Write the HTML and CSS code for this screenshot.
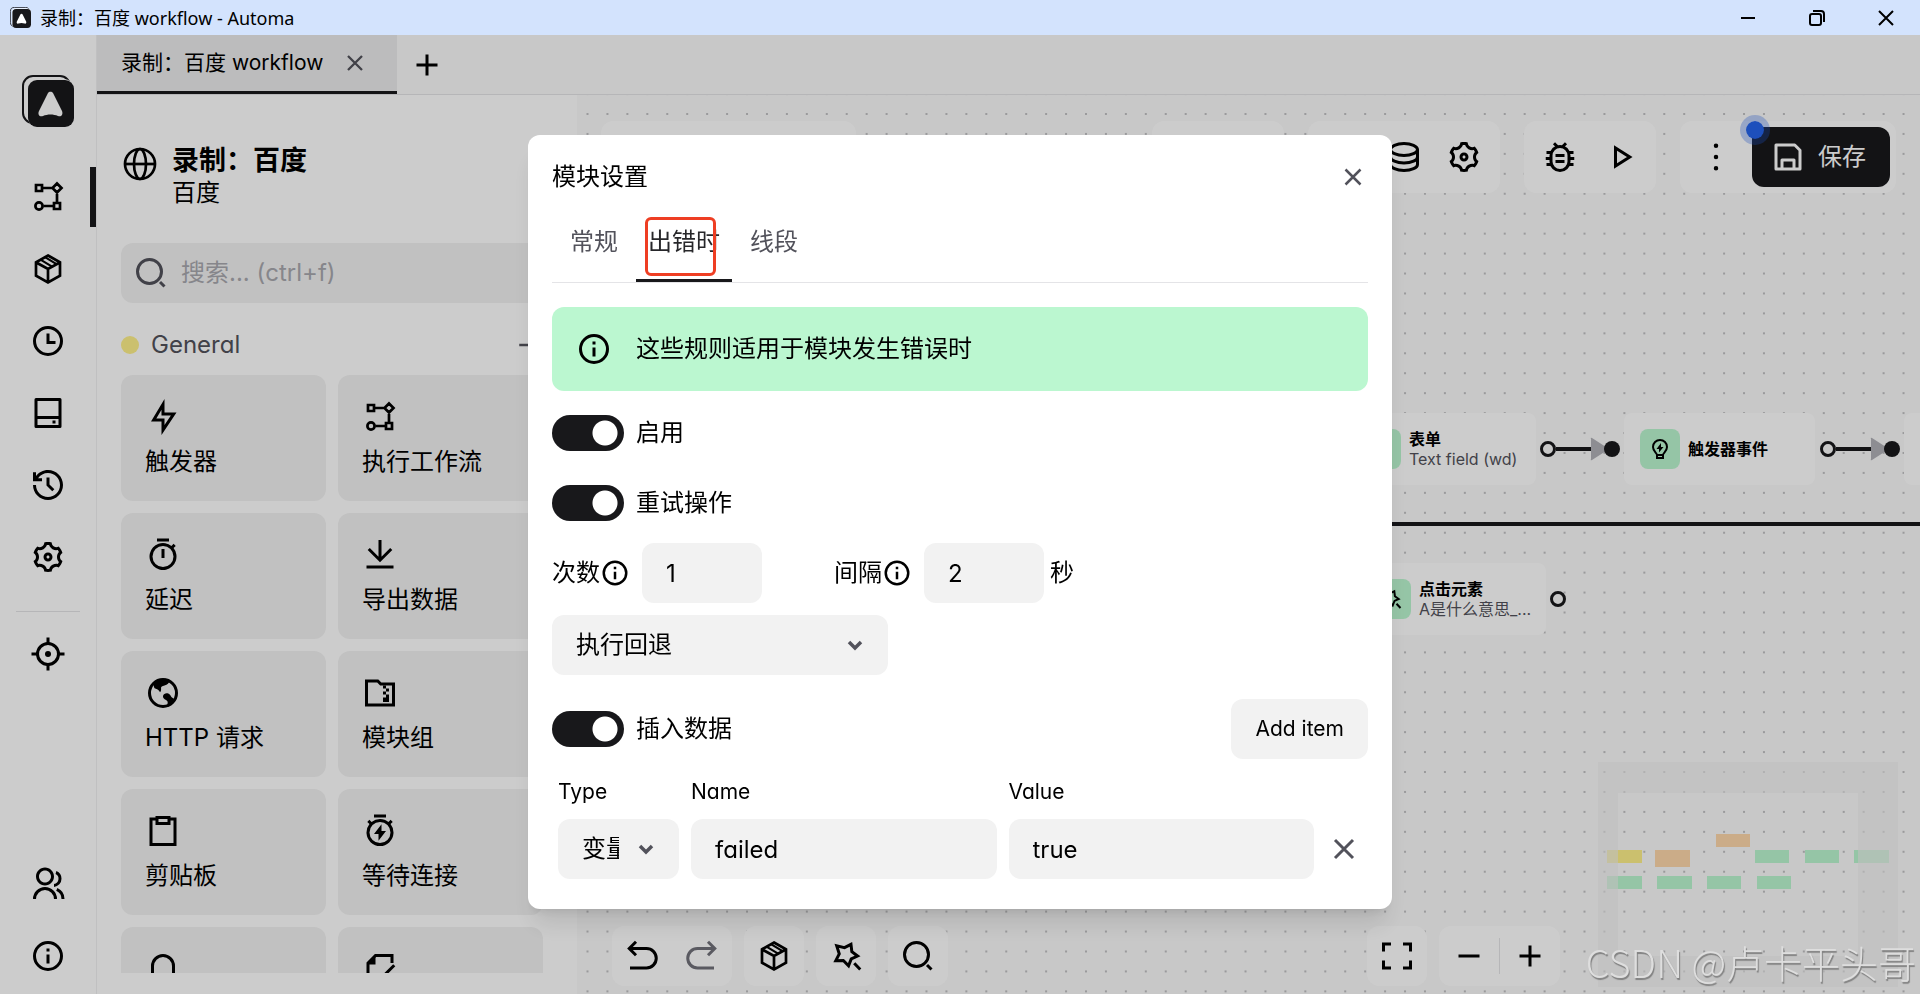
FILE: index.html
```
<!DOCTYPE html>
<html lang="zh-CN">
<head>
    <meta charset="UTF-8">
    <meta name="viewport" content="width=device-width, initial-scale=1.0">
    <title>录制：百度 workflow - Automa</title>
    <link rel="stylesheet" href="styles.css">
</head>
<body>
    <svg class="sprite" aria-hidden="true">
        <symbol id="logo" viewBox="0 0 52 52">
            <rect x="1" y="1" width="47" height="47" rx="10" fill="none" stroke="currentColor" stroke-width="2"/>
            <rect x="5" y="4" width="47" height="47" rx="10" fill="#fff"/>
            <rect x="6" y="5" width="46" height="47" rx="9" fill="currentColor"/>
            <path d="M26 18c1-1.800 4-1.800 5 0l9 18c1.400 3.600-.8 6.200-4 5-4.600-2-10.500-2-15 0-3.400 1.200-5.600-1.400-4-5z" fill="#fff"/>
        </symbol>
        <symbol id="flow" viewBox="0 0 24 24">
            <path d="M4 4h4v4H4zM16 16h4v4h-4zM18 3l3 3-3 3-3-3zM8 6h7M18 9v7M9 18h7" fill="none" stroke="currentColor" stroke-width="1.800"/>
            <circle cx="6" cy="18" r="2.400" fill="none" stroke="currentColor" stroke-width="1.800"/>
        </symbol>
        <symbol id="cube" viewBox="0 0 24 24">
            <path d="M12 3l8 4.500v9L12 21l-8-4.500v-9zM4.200 7.700L12 12l7.800-4.300M12 12v8.800" fill="none" stroke="currentColor" stroke-width="1.800"/>
            <path d="M7 5.800l7.700 4.600M10 4.100l7.700 4.600" fill="none" stroke="currentColor" stroke-width="1.400"/>
        </symbol>
        <symbol id="clock" viewBox="0 0 24 24">
            <circle cx="12" cy="12" r="9" fill="none" stroke="currentColor" stroke-width="2"/>
            <path d="M12 7v6h5" fill="none" stroke="currentColor" stroke-width="2"/>
        </symbol>
        <symbol id="drive" viewBox="0 0 24 24">
            <path d="M4 3h16v18H4zM4 15h16" fill="none" stroke="currentColor" stroke-width="2" stroke-linejoin="round"/>
            <path d="M15 17h2v2h-2z" fill="currentColor"/>
        </symbol>
        <symbol id="history" viewBox="0 0 24 24">
            <path fill="currentColor" d="M12 2C17.523 2 22 6.477 22 12C22 17.523 17.523 22 12 22C6.477 22 2 17.523 2 12H4C4 16.418 7.582 20 12 20C16.418 20 20 16.418 20 12C20 7.582 16.418 4 12 4C9.250 4 6.824 5.387 5.385 7.500L8 7.500V9.500H2V3.500H4L4 6C5.824 3.571 8.729 2 12 2ZM13 7L13 11.585L16.243 14.828L14.828 16.243L11 12.413L11 7H13Z"/>
        </symbol>
        <symbol id="settings" viewBox="0 0 24 24">
            <path fill="currentColor" d="M3.339 17C2.907 16.252 2.583 15.470 2.361 14.674C3.334 14.178 4 13.167 4 12C4 10.835 3.335 9.824 2.364 9.327C2.812 7.717 3.659 6.216 4.865 4.990C5.781 5.584 6.989 5.655 8 5.072C9.010 4.489 9.553 3.406 9.496 2.316C11.161 1.885 12.885 1.900 14.503 2.319C14.448 3.408 14.990 4.489 16 5.072C17.010 5.655 18.219 5.584 19.135 4.990C19.713 5.580 20.228 6.252 20.660 7C21.092 7.749 21.417 8.530 21.638 9.326C20.666 9.822 20 10.834 20 12C20 13.166 20.665 14.176 21.636 14.673C21.188 16.284 20.341 17.784 19.135 19.010C18.219 18.416 17.010 18.345 16 18.928C14.989 19.512 14.447 20.594 14.503 21.684C12.838 22.116 11.115 22.100 9.496 21.682C9.552 20.592 9.009 19.511 8 18.928C6.989 18.345 5.781 18.416 4.865 19.010C4.286 18.421 3.772 17.749 3.339 17ZM9 17.196C10.091 17.827 10.875 18.823 11.250 19.966C11.749 20.013 12.250 20.014 12.749 19.968C13.124 18.824 13.908 17.827 15 17.196C16.092 16.566 17.347 16.386 18.525 16.632C18.815 16.224 19.065 15.789 19.273 15.334C18.471 14.437 18 13.260 18 12C18 10.740 18.471 9.563 19.273 8.667C19.169 8.441 19.054 8.218 18.928 8C18.802 7.782 18.667 7.571 18.523 7.368C17.346 7.615 16.091 7.434 15 6.804C13.908 6.174 13.125 5.178 12.749 4.035C12.251 3.987 11.749 3.986 11.251 4.033C10.876 5.177 10.092 6.174 9 6.804C7.908 7.434 6.652 7.615 5.474 7.368C5.185 7.776 4.935 8.211 4.727 8.666C5.529 9.563 6 10.740 6 12C6 13.260 5.529 14.437 4.727 15.334C4.831 15.560 4.946 15.782 5.072 16C5.197 16.218 5.332 16.429 5.476 16.632C6.654 16.386 7.908 16.566 9 17.196ZM12 15C10.343 15 9 13.657 9 12C9 10.343 10.343 9 12 9C13.657 9 15 10.343 15 12C15 13.657 13.657 15 12 15ZM12 13C12.552 13 13 12.552 13 12C13 11.448 12.552 11 12 11C11.447 11 11 11.448 11 12C11 12.552 11.447 13 12 13Z"/>
        </symbol>
        <symbol id="focus" viewBox="0 0 24 24">
            <circle cx="12" cy="12" r="7" fill="none" stroke="currentColor" stroke-width="2"/>
            <path d="M12 1v4M12 19v4M1 12h4M19 12h4" stroke="currentColor" stroke-width="2"/>
            <circle cx="12" cy="12" r="2" fill="currentColor"/>
        </symbol>
        <symbol id="users" viewBox="0 0 24 24">
            <path fill="currentColor" d="M2 22a8 8 0 1 1 16 0h-2a6 6 0 1 0-12 0H2zm8-9c-3.315 0-6-2.685-6-6s2.685-6 6-6 6 2.685 6 6-2.685 6-6 6zm0-2c2.210 0 4-1.790 4-4s-1.790-4-4-4-4 1.790-4 4 1.790 4 4 4zm8.284 3.703A8.002 8.002 0 0 1 23 22h-2a6.001 6.001 0 0 0-3.537-5.473l.82-1.824zm-.688-11.290A5.500 5.500 0 0 1 21 8.500a5.499 5.499 0 0 1-5 5.478v-2.013a3.500 3.500 0 0 0 1.041-6.609l.555-1.943z"/>
        </symbol>
        <symbol id="info" viewBox="0 0 24 24">
            <circle cx="12" cy="12" r="9" fill="none" stroke="currentColor" stroke-width="2"/>
            <path d="M11 7h2v2h-2zM11 11h2v6h-2z" fill="currentColor"/>
        </symbol>
        <symbol id="globe" viewBox="0 0 24 24">
            <ellipse cx="12" cy="12" rx="10" ry="10" fill="none" stroke="currentColor" stroke-width="1.800"/>
            <ellipse cx="12" cy="12" rx="4" ry="10" fill="none" stroke="currentColor" stroke-width="1.800"/>
            <path d="M2 12h20" stroke="currentColor" stroke-width="1.800"/>
        </symbol>
        <symbol id="search" viewBox="0 0 24 24">
            <circle cx="11" cy="11" r="8" fill="none" stroke="currentColor" stroke-width="2"/>
            <path d="M18 18l3 3" stroke="currentColor" stroke-width="2"/>
        </symbol>
        <symbol id="close" viewBox="0 0 24 24">
            <path d="M6 6l12 12M18 6L6 18" stroke="currentColor" stroke-width="2"/>
        </symbol>
        <symbol id="plus" viewBox="0 0 24 24">
            <path d="M12 5v14M5 12h14" stroke="currentColor" stroke-width="2"/>
        </symbol>
        <symbol id="minus" viewBox="0 0 24 24">
            <path d="M5 12h14" stroke="currentColor" stroke-width="2"/>
        </symbol>
        <symbol id="flash" viewBox="0 0 24 24">
            <path fill="currentColor" d="M13 9h8L11 24v-9H4l9-15v9zm-2 2V7.220L7.532 13H13v4.394L17.263 11H11z"/>
        </symbol>
        <symbol id="timer" viewBox="0 0 24 24">
            <path fill="currentColor" d="M17.618 5.968l1.453-1.453 1.414 1.414-1.453 1.453a9 9 0 1 1-1.414-1.414zM12 20a7 7 0 1 0 0-14 7 7 0 0 0 0 14zM11 8h2v6h-2V8zM8 1h8v2H8V1z"/>
        </symbol>
        <symbol id="timer-flash" viewBox="0 0 24 24">
            <path fill="currentColor" d="M6.382 5.968A8.962 8.962 0 0 1 12 4c2.125 0 4.078.736 5.618 1.968l1.453-1.453 1.414 1.414-1.453 1.453a9 9 0 1 1-14.064 0L3.515 5.930l1.414-1.414 1.453 1.453zM12 20a7 7 0 1 0 0-14 7 7 0 0 0 0 14zm1-8h3l-5 6.500V14H8l5-6.505V12zM8 1h8v2H8V1z"/>
        </symbol>
        <symbol id="download" viewBox="0 0 24 24">
            <path d="M12 2v14M4.500 8L12 15.500 19.500 8M3 20h18" fill="none" stroke="currentColor" stroke-width="2"/>
        </symbol>
        <symbol id="earth" viewBox="0 0 24 24">
            <circle cx="12" cy="12" r="9" fill="none" stroke="currentColor" stroke-width="2"/>
            <path fill="currentColor" d="M6 5c3-3 8-3 10.500-1.500-.5 2-1.500 3-3.500 3.500-1.500.3-2.500.8-2.300 2 .1.900 0 2-.7 2.500-.6-1.200-1.500-2-2.800-2.300C6 9 5.500 7.500 6 5zM12 14c.5-2 3-2.500 4.500-1 .9 1 .8 1.800 2 2.300l1 .7-3.500 5c-1 .2-1.500-.5-1-1.800.4-1.200 0-2-1-2.500-1.300-.6-2.200-1.500-2-2.700z"/>
        </symbol>
        <symbol id="folder-zip" viewBox="0 0 24 24">
            <path d="M3 4h7.500l2 2H21v14H3z" fill="none" stroke="currentColor" stroke-width="2"/>
            <path fill="currentColor" d="M14 7h2v2h-2zM16 9h2v2h-2zM14 11h2v2h-2zM16 13h2v5h-4v-3h2z"/>
        </symbol>
        <symbol id="clipboard" viewBox="0 0 24 24">
            <path d="M8 4H4v17h16V4h-4M8 3h8v4H8z" fill="none" stroke="currentColor" stroke-width="2"/>
        </symbol>
        <symbol id="bell" viewBox="0 0 24 24">
            <path d="M5 18V10a7 7 0 0 1 14 0v8M3 19h18" fill="none" stroke="currentColor" stroke-width="2"/>
        </symbol>
        <symbol id="file-edit" viewBox="0 0 24 24">
            <path d="M20 8V3H9L4 8v13h16v-5M21.500 9.500L13 18" fill="none" stroke="currentColor" stroke-width="2"/>
            <path d="M4 9l5-6v6z" fill="currentColor"/>
        </symbol>
        <symbol id="database" viewBox="0 0 24 24">
            <path d="M3 7v10c0 2.200 4 4 9 4s9-1.800 9-4V7M3 12c0 2.200 4 4 9 4s9-1.800 9-4" fill="none" stroke="currentColor" stroke-width="2"/>
            <ellipse cx="12" cy="7" rx="9" ry="4" fill="none" stroke="currentColor" stroke-width="2"/>
        </symbol>
        <symbol id="bug" viewBox="0 0 24 24">
            <rect x="6" y="5" width="12" height="16" rx="6" fill="none" stroke="currentColor" stroke-width="2"/>
            <path d="M8 2.800l2.500 2.500M16 2.800l-2.500 2.500M3 9h3.500M17.500 9H21M2.500 13H6M18 13h3.500M3 17h3.500M17.500 17H21M9 11h6M9 15h6" fill="none" stroke="currentColor" stroke-width="2"/>
        </symbol>
        <symbol id="play" viewBox="0 0 24 24">
            <path d="M9 6v12l9.500-6z" fill="none" stroke="currentColor" stroke-width="2"/>
        </symbol>
        <symbol id="more" viewBox="0 0 24 24">
            <path d="M12 3a1.500 1.500 0 1 1 0 3 1.500 1.500 0 0 1 0-3zM12 10.500a1.500 1.500 0 1 1 0 3 1.500 1.500 0 0 1 0-3zM12 18a1.500 1.500 0 1 1 0 3 1.500 1.500 0 0 1 0-3z" fill="currentColor"/>
        </symbol>
        <symbol id="save" viewBox="0 0 24 24">
            <path d="M4 4h12.500L20 7.500V20H4zM8 20v-6h8v6" fill="none" stroke="currentColor" stroke-width="2" stroke-linejoin="round"/>
        </symbol>
        <symbol id="undo" viewBox="0 0 24 24">
            <path d="M3.500 7H15a6.500 6.500 0 0 1 0 13H4M8 2.500L3.500 7 8 11.500" fill="none" stroke="currentColor" stroke-width="2"/>
        </symbol>
        <symbol id="redo" viewBox="0 0 24 24">
            <path d="M20.500 7H9a6.500 6.500 0 0 0 0 13h11M16 2.500L20.500 7 16 11.500" fill="none" stroke="currentColor" stroke-width="2"/>
        </symbol>
        <symbol id="star-wand" viewBox="0 0 24 24">
            <path d="M15.300 4.200l.6 5 3.800 2.800-4.200 1.900-1.800 4.600-3.500-3.500-5 .1 2.300-4.500L5.800 5.200l5.200 1.200zM17.500 16.800l4 4.200" fill="none" stroke="currentColor" stroke-width="2"/>
        </symbol>
        <symbol id="fullscreen" viewBox="0 0 24 24">
            <path d="M8 4H3v5M16 4h5v5M3 15v5h5M21 15v5h-5" fill="none" stroke="currentColor" stroke-width="2"/>
        </symbol>
        <symbol id="bulb" viewBox="0 0 24 24">
            <path d="M9 18c0-2-4-3.500-4-8a7 7 0 0 1 14 0c0 4.500-4 6-4 8zM9 18v3h6v-3" fill="none" stroke="currentColor" stroke-width="2"/>
            <path d="M13 10h2.500L11 15.500V12H8.500L13 6z" fill="currentColor"/>
        </symbol>
        <symbol id="chevron" viewBox="0 0 24 24">
            <path d="M6 9l6 6 6-6" fill="none" stroke="currentColor" stroke-width="3.500"/>
        </symbol>
    </svg>

    <header class="titlebar">
        <svg class="titlebar-logo"><use href="#logo"/></svg>
        <span class="titlebar-text">录制：百度 workflow - Automa</span>
        <div class="window-controls">
            <button aria-label="最小化"><svg viewBox="0 0 16 16"><path d="M1 8h14"/></svg></button>
            <button aria-label="还原"><svg viewBox="0 0 16 16"><rect x="1" y="4" width="11" height="11" rx="2"/><path d="M4 1h8a3 3 0 0 1 3 3v8"/></svg></button>
            <button aria-label="关闭"><svg viewBox="0 0 16 16"><path d="M1 1l14 14M15 1L1 15"/></svg></button>
        </div>
    </header>

    <div class="app">
        <nav class="sidebar">
            <svg class="sidebar-logo"><use href="#logo"/></svg>
            <a class="nav-item active" href="#" aria-label="工作流"><svg class="icon"><use href="#flow"/></svg></a>
            <a class="nav-item" href="#" aria-label="模块包"><svg class="icon"><use href="#cube"/></svg></a>
            <a class="nav-item" href="#" aria-label="定时"><svg class="icon"><use href="#clock"/></svg></a>
            <a class="nav-item" href="#" aria-label="存储"><svg class="icon"><use href="#drive"/></svg></a>
            <a class="nav-item" href="#" aria-label="日志"><svg class="icon"><use href="#history"/></svg></a>
            <a class="nav-item" href="#" aria-label="设置"><svg class="icon"><use href="#settings"/></svg></a>
            <hr class="nav-line">
            <button class="nav-item" aria-label="元素选择器"><svg class="icon"><use href="#focus"/></svg></button>
            <div class="spacer"></div>
            <a class="nav-item" href="#" aria-label="社区"><svg class="icon"><use href="#users"/></svg></a>
            <a class="nav-item" href="#" aria-label="关于"><svg class="icon"><use href="#info"/></svg></a>
        </nav>

        <main class="main">
            <div class="tabbar">
                <div class="page-tab">
                    <span>录制：百度 workflow</span>
                    <button class="tab-close" aria-label="关闭标签"><svg class="icon"><use href="#close"/></svg></button>
                </div>
                <button class="tab-add" aria-label="新标签"><svg class="icon"><use href="#plus"/></svg></button>
            </div>

            <div class="workspace">
                <aside class="panel">
                    <div class="panel-head">
                        <svg class="icon"><use href="#globe"/></svg>
                        <div>
                            <h1>录制：百度</h1>
                            <p>百度</p>
                        </div>
                    </div>
                    <label class="search">
                        <svg class="icon"><use href="#search"/></svg>
                        <input type="search" placeholder="搜索... (ctrl+f)">
                    </label>
                    <div class="category">
                        <span class="category-dot"></span>
                        <span>General</span>
                        <svg class="icon"><use href="#minus"/></svg>
                    </div>
                    <div class="blocks">
                        <div class="block"><svg class="icon"><use href="#flash"/></svg><p>触发器</p></div>
                        <div class="block"><svg class="icon"><use href="#flow"/></svg><p>执行工作流</p></div>
                        <div class="block"><svg class="icon"><use href="#timer"/></svg><p>延迟</p></div>
                        <div class="block"><svg class="icon"><use href="#download"/></svg><p>导出数据</p></div>
                        <div class="block"><svg class="icon"><use href="#earth"/></svg><p>HTTP 请求</p></div>
                        <div class="block"><svg class="icon"><use href="#folder-zip"/></svg><p>模块组</p></div>
                        <div class="block"><svg class="icon"><use href="#clipboard"/></svg><p>剪贴板</p></div>
                        <div class="block"><svg class="icon"><use href="#timer-flash"/></svg><p>等待连接</p></div>
                        <div class="block"><svg class="icon"><use href="#bell"/></svg></div>
                        <div class="block"><svg class="icon"><use href="#file-edit"/></svg></div>
                    </div>
                </aside>

                <section class="canvas">
                    <svg class="canvas-bg" aria-hidden="true">
                        <defs>
                            <pattern id="dots" x="9.500" y="18" width="19.940" height="19.940" patternUnits="userSpaceOnUse">
                                <circle cx="1" cy="1" r=".8" fill="#77777c"/>
                            </pattern>
                        </defs>
                        <rect width="100%" height="100%" fill="url(#dots)"/>
                        <path d="M700 429h700" stroke="#18181b" stroke-width="4"/>
                    </svg>

                    <div class="node node-form">
                        <div class="node-icon"></div>
                        <div><strong>表单</strong><p>Text field (wd)</p></div>
                    </div>
                    <div class="node node-event">
                        <div class="node-icon"><svg><use href="#bulb"/></svg></div>
                        <div><strong>触发器事件</strong></div>
                    </div>
                    <div class="node node-next">
                        <div class="node-icon"></div>
                    </div>
                    <div class="node node-click">
                        <div class="node-icon"><svg><use href="#star-wand"/></svg></div>
                        <div><strong>点击元素</strong><p>A是什么意思_...</p></div>
                    </div>
                    <svg class="edge edge-one" viewBox="0 0 80 24"><path d="M16 12h36" class="edge-line"/><path d="M51 2q-1-2 1-1l14 9v4l-14 9q-2 1-1-1z" class="edge-arrow"/><circle cx="8" cy="12" r="6.500" class="edge-out"/><circle cx="72" cy="12" r="8" class="edge-in"/></svg>
                    <svg class="edge edge-two" viewBox="0 0 80 24"><path d="M16 12h36" class="edge-line"/><path d="M51 2q-1-2 1-1l14 9v4l-14 9q-2 1-1-1z" class="edge-arrow"/><circle cx="8" cy="12" r="6.500" class="edge-out"/><circle cx="72" cy="12" r="8" class="edge-in"/></svg>
                    <svg class="edge edge-end" viewBox="0 0 80 24"><circle cx="8" cy="12" r="6.500" class="edge-out"/></svg>

                    <div class="toolbar-row">
                        <div class="toolbar toolbar-tabs"></div>
                        <div class="spacer"></div>
                        <div class="toolbar toolbar-share"></div>
                        <div class="toolbar">
                            <span class="tool-gap"></span>
                            <button class="tool" aria-label="存储"><svg class="icon"><use href="#database"/></svg></button>
                            <button class="tool" aria-label="设置"><svg class="icon"><use href="#settings"/></svg></button>
                        </div>
                        <div class="toolbar">
                            <button class="tool" aria-label="调试"><svg class="icon"><use href="#bug"/></svg></button>
                            <button class="tool" aria-label="运行"><svg class="icon"><use href="#play"/></svg></button>
                        </div>
                        <div class="toolbar toolbar-save">
                            <button class="tool" aria-label="更多"><svg class="icon"><use href="#more"/></svg></button>
                            <button class="save-btn"><span class="unsaved"></span><svg class="icon"><use href="#save"/></svg>保存</button>
                        </div>
                    </div>

                    <div class="controls-row">
                        <div class="controls">
                            <button class="tool" aria-label="撤销"><svg class="icon"><use href="#undo"/></svg></button>
                            <button class="tool" aria-label="重做" disabled><svg class="icon"><use href="#redo"/></svg></button>
                        </div>
                        <div class="controls"><button class="tool" aria-label="模块包"><svg class="icon"><use href="#cube"/></svg></button></div>
                        <div class="controls"><button class="tool" aria-label="自动排列"><svg class="icon"><use href="#star-wand"/></svg></button></div>
                        <div class="controls"><button class="tool" aria-label="搜索模块"><svg class="icon"><use href="#search"/></svg></button></div>
                        <div class="spacer"></div>
                        <div class="controls"><button class="tool" aria-label="适应视图"><svg class="icon"><use href="#fullscreen"/></svg></button></div>
                        <div class="controls">
                            <button class="tool" aria-label="缩小"><svg class="icon"><use href="#minus"/></svg></button>
                            <span class="controls-line"></span>
                            <button class="tool" aria-label="放大"><svg class="icon"><use href="#plus"/></svg></button>
                        </div>
                    </div>

                    <svg class="minimap" viewBox="0 0 300 225" aria-hidden="true">
                        <g fill="#bbf7d0">
                            <path d="M157 88h34v13h-34zM207 88h34v13h-34zM256 88h35v13h-35z"/>
                            <path d="M9 114h35v13H9zM59 114h35v13H59zM109 114h34v13h-34zM159 114h34v13h-34z"/>
                        </g>
                        <path fill="#fef08a" d="M9 88h35v13H9z"/>
                        <path fill="#fed7aa" d="M57 88h35v17H57zM118 72h34v13h-34z"/>
                        <path class="minimap-mask" fill-rule="evenodd" d="M0 0h300v225H0zM20 31v163h240V31z"/>
                    </svg>
                </section>
            </div>
        </main>
    </div>

    <div class="overlay">
        <div class="modal" role="dialog" aria-labelledby="modalTitle">
            <div class="modal-head">
                <h2 id="modalTitle">模块设置</h2>
                <button class="modal-close" aria-label="关闭"><svg class="icon"><use href="#close"/></svg></button>
            </div>
            <div class="modal-tabs">
                <button>常规</button>
                <button class="active">出错时<span class="mark"></span></button>
                <button>线段</button>
            </div>
            <div class="alert">
                <svg class="icon"><use href="#info"/></svg>
                <p>这些规则适用于模块发生错误时</p>
            </div>
            <label class="switch"><input type="checkbox" checked><span>启用</span></label>
            <label class="switch switch-retry"><input type="checkbox" checked><span>重试操作</span></label>
            <div class="retry">
                <label for="retryTimes">次数</label>
                <svg class="icon"><use href="#info"/></svg>
                <input class="field field-num" id="retryTimes" type="text" value="1">
                <label class="retry-interval" for="retryInterval">间隔</label>
                <svg class="icon"><use href="#info"/></svg>
                <input class="field field-num" id="retryInterval" type="text" value="2">
                <span class="unit">秒</span>
            </div>
            <div class="select-wrap select-fallback">
                <select class="field" aria-label="失败后"><option>执行回退</option></select>
                <svg class="chevron"><use href="#chevron"/></svg>
            </div>
            <div class="insert">
                <label class="switch"><input type="checkbox" checked><span>插入数据</span></label>
                <button class="add-btn">Add item</button>
            </div>
            <table class="data">
                <thead>
                    <tr>
                        <th class="col-type" id="colType">Type</th>
                        <th id="colName">Name</th>
                        <th id="colValue">Value</th>
                        <th class="col-remove"></th>
                    </tr>
                </thead>
                <tbody>
                    <tr>
                        <td>
                            <div class="select-wrap">
                                <select class="field" aria-labelledby="colType"><option>变量</option></select>
                                <svg class="chevron"><use href="#chevron"/></svg>
                            </div>
                        </td>
                        <td><input class="field" type="text" value="failed" aria-labelledby="colName"></td>
                        <td><input class="field" type="text" value="true" aria-labelledby="colValue"></td>
                        <td><button class="remove-btn" aria-label="删除"><svg class="icon"><use href="#close"/></svg></button></td>
                    </tr>
                </tbody>
            </table>
        </div>
    </div>

    <div class="watermark">CSDN @卢卡平头哥</div>
</body>
</html>
```
FILE: styles.css
```
* {
    box-sizing: border-box;
}

body {
    margin: 0;
    height: 100vh;
    display: flex;
    flex-direction: column;
    overflow: hidden;
    font-family: Inter, "Noto Sans CJK SC", sans-serif;
    font-feature-settings: "cv11";
    font-size: 24px;
    line-height: 36px;
    color: #000;
}

h1, h2, p {
    margin: 0;
    font-weight: 400;
}

button, input, select {
    font: inherit;
    font-feature-settings: inherit;
    color: inherit;
    border: none;
    background: none;
    padding: 0;
    margin: 0;
}

button {
    cursor: pointer;
}

.sprite {
    display: none;
}

.icon {
    width: 36px;
    height: 36px;
    flex: none;
    display: block;
}

.spacer {
    flex: 1;
}

/* window title bar */
.titlebar {
    height: 35px;
    flex: none;
    display: flex;
    align-items: center;
    background: #d3e3fd;
    padding-left: 10px;
    font-family: "Noto Sans", "Noto Sans CJK SC", sans-serif;
    font-size: 18px;
    line-height: 24px;
}

.titlebar-logo {
    width: 21px;
    height: 21px;
    margin-right: 9px;
    color: #18181b;
}

.window-controls {
    display: flex;
    margin-left: auto;
}

.window-controls button {
    width: 69px;
    height: 35px;
    display: flex;
    align-items: center;
    justify-content: center;
}

.window-controls svg {
    width: 16px;
    height: 16px;
    fill: none;
    stroke: #000;
    stroke-width: 2;
}

.app {
    flex: 1;
    min-height: 0;
    display: flex;
}

/* left navigation */
.sidebar {
    width: 97px;
    flex: none;
    display: flex;
    flex-direction: column;
    align-items: center;
    gap: 12px;
    padding: 40px 0 8px;
    background: #fff;
    border-right: 1px solid #f0f0f2;
}

.sidebar-logo {
    width: 52px;
    height: 52px;
    flex: none;
    margin-bottom: 28px;
    color: #18181b;
}

.nav-item {
    width: 100%;
    height: 60px;
    flex: none;
    display: flex;
    align-items: center;
    justify-content: center;
    color: #000;
}

.nav-item.active {
    padding-left: 6px;
    border-right: 6px solid #18181b;
}

.nav-line {
    width: 64px;
    margin: 12px 0 0;
    border: none;
    border-top: 1px solid #e4e4e7;
}

.main {
    flex: 1;
    min-width: 0;
    display: flex;
    flex-direction: column;
    background: #fafafa;
}

.tabbar {
    height: 60px;
    flex: none;
    display: flex;
    border-bottom: 1px solid #e4e4e7;
    font-size: 21px;
}

.page-tab {
    display: flex;
    align-items: center;
    gap: 18px;
    padding: 0 28px 0 24px;
    background: #ececed;
    border-bottom: 3px solid #18181b;
}

.tab-close .icon {
    width: 28px;
    height: 28px;
    color: #52525b;
}

.tab-add {
    padding: 0 12px;
}

.workspace {
    flex: 1;
    min-height: 0;
    display: flex;
}

/* blocks panel */
.panel {
    width: 480px;
    flex: none;
    display: flex;
    flex-direction: column;
    padding: 51px 34px 21px 24px;
    background: #fff;
}

.panel-head {
    display: flex;
    gap: 14px;
    padding-left: 1px;
}

.panel-head h1 {
    font-size: 27px;
    line-height: 30px;
    font-weight: 700;
}

.panel-head p {
    line-height: 34px;
}

.search {
    height: 60px;
    flex: none;
    display: flex;
    align-items: center;
    gap: 12px;
    margin-top: 33px;
    padding: 0 12px;
    background: #f2f2f2;
    border-radius: 12px;
    color: #52525b;
}

.search input {
    flex: 1;
    min-width: 0;
    outline: none;
}

.search input::placeholder {
    color: #a8a8ae;
}

.category {
    display: flex;
    align-items: center;
    gap: 12px;
    margin: 24px 0 12px;
    color: #52525b;
}

.category-dot {
    width: 18px;
    height: 18px;
    border-radius: 50%;
    background: #fef08a;
}

.category .icon {
    width: 30px;
    height: 30px;
    margin-left: auto;
}

.blocks {
    flex: 1;
    min-height: 0;
    overflow: hidden;
    display: grid;
    grid-template-columns: 1fr 1fr;
    grid-auto-rows: 126px;
    gap: 12px;
}

.block {
    padding: 24px;
    background: #f2f2f2;
    border-radius: 12px;
}

.block p {
    margin-top: 9px;
}

/* workflow canvas */
.canvas {
    flex: 1;
    min-width: 0;
    position: relative;
    display: flex;
    flex-direction: column;
    justify-content: space-between;
    overflow: hidden;
}

.canvas-bg {
    position: absolute;
    inset: 0;
    width: 100%;
    height: 100%;
}

.toolbar-row,
.controls-row {
    position: relative;
    display: flex;
}

.toolbar-row {
    gap: 24px;
    padding: 26px 24px 0;
}

.toolbar {
    height: 72px;
    display: flex;
    padding: 6px;
    background: #fff;
    border-radius: 12px;
}

.toolbar-tabs {
    width: 255px;
}

.toolbar-share {
    width: 132px;
}

.toolbar-save {
    gap: 6px;
}

.tool,
.tool-gap {
    width: 60px;
    height: 60px;
    display: flex;
    align-items: center;
    justify-content: center;
}

.tool:disabled {
    color: #71717a;
}

.save-btn {
    position: relative;
    display: flex;
    align-items: center;
    gap: 12px;
    padding: 0 24px 0 18px;
    color: #fff;
    background: #18181b;
    border-radius: 12px;
}

.unsaved {
    position: absolute;
    top: -12px;
    left: -12px;
    width: 30px;
    height: 30px;
    border: 6px solid rgba(37, 99, 235, 0.3);
    border-radius: 50%;
    background: #2563eb;
    background-clip: padding-box;
}

.controls-row {
    gap: 12px;
    padding: 0 360px 8px 35px;
}

.controls {
    display: flex;
    align-items: center;
    background: #fff;
    border-radius: 12px;
}

.controls-line {
    width: 1px;
    height: 36px;
    background: #e4e4e7;
}

.node {
    position: absolute;
    width: 191px;
    height: 72px;
    display: flex;
    align-items: center;
    gap: 8px;
    padding: 0 16px;
    background: #fff;
    border-radius: 8px;
    font-size: 16px;
    line-height: 20px;
}

.node p {
    color: #52525b;
    white-space: nowrap;
}

.node-icon {
    width: 40px;
    height: 40px;
    flex: none;
    display: flex;
    align-items: center;
    justify-content: center;
    background: #bbf7d0;
    border-radius: 8px;
}

.node-icon svg {
    width: 24px;
    height: 24px;
}

.node-form {
    left: 768px;
    top: 318px;
}

.node-event {
    left: 1047px;
    top: 318px;
}

.node-next {
    left: 1327px;
    top: 318px;
}

.node-click {
    left: 778px;
    top: 468px;
}

.edge {
    position: absolute;
    width: 80px;
    height: 24px;
}

.edge-one {
    left: 963px;
    top: 342px;
}

.edge-two {
    left: 1243px;
    top: 342px;
}

.edge-end {
    left: 973px;
    top: 492px;
}

.edge-line {
    stroke: #18181b;
    stroke-width: 4;
}

.edge-arrow {
    fill: #b1b1b7;
}

.edge-out {
    fill: #fafafa;
    stroke: #18181b;
    stroke-width: 3;
}

.edge-in {
    fill: #18181b;
}

.minimap {
    position: absolute;
    right: 22px;
    bottom: 7px;
    width: 300px;
    height: 225px;
}

.minimap-mask {
    fill: rgba(240, 240, 240, 0.6);
}

/* block settings dialog */
.overlay {
    position: fixed;
    inset: 35px 0 0;
    display: flex;
    align-items: flex-start;
    justify-content: center;
    padding-top: 100px;
    background: rgba(0, 0, 0, 0.2);
}

.modal {
    width: 864px;
    padding: 24px;
    background: #fff;
    border-radius: 12px;
    box-shadow: 0 20px 25px -5px rgba(0, 0, 0, 0.1), 0 8px 10px -6px rgba(0, 0, 0, 0.1);
}

.modal-head {
    display: flex;
    align-items: center;
    justify-content: space-between;
}

.modal-head h2 {
    font-size: 24px;
}

.modal-close {
    color: #52525b;
}

.modal-close .icon {
    width: 30px;
    height: 30px;
}

.modal-tabs {
    display: flex;
    gap: 6px;
    margin-top: 6px;
    padding-left: 6px;
    border-bottom: 1px solid #e4e4e7;
    color: #52525b;
}

.modal-tabs button {
    position: relative;
    height: 81px;
    padding: 4px 12px 0;
    border-bottom: 3px solid transparent;
}

.modal-tabs .active {
    color: #27272a;
    border-color: #18181b;
}

.mark {
    position: absolute;
    left: 9px;
    top: 16px;
    width: 71px;
    height: 59px;
    border: 3px solid #ee3e23;
    border-radius: 6px;
}

.alert {
    display: flex;
    gap: 24px;
    margin: 24px 0;
    padding: 24px;
    background: #bbf7d0;
    border-radius: 12px;
}

.switch {
    width: fit-content;
    display: flex;
    align-items: center;
    gap: 12px;
}

.switch input {
    appearance: none;
    width: 72px;
    height: 36px;
    border-radius: 18px;
    background: #18181b radial-gradient(circle at 53px 18px, #fff 12px, transparent 13px);
}

.switch-retry {
    margin-top: 34px;
}

.retry {
    display: flex;
    align-items: center;
    margin-top: 22px;
}

.retry .icon {
    width: 30px;
    height: 30px;
    margin-right: 12px;
}

.retry-interval {
    margin-left: 72px;
}

.unit {
    margin-left: 6px;
}

.field {
    width: 100%;
    height: 60px;
    display: block;
    padding: 0 24px;
    background: #f2f2f2;
    border-radius: 12px;
}

.field-num {
    width: 120px;
}

.select-wrap {
    position: relative;
}

.select-wrap select {
    appearance: none;
    padding-right: 60px;
    text-overflow: clip;
}

.select-fallback {
    width: 336px;
    margin-top: 12px;
}

.chevron {
    position: absolute;
    right: 21px;
    top: 18px;
    width: 24px;
    height: 24px;
    color: #52525b;
    pointer-events: none;
}

.insert {
    display: flex;
    align-items: center;
    justify-content: space-between;
    margin: 24px 0 12px;
}

.add-btn {
    height: 60px;
    padding: 0 24px;
    background: #f2f2f2;
    border-radius: 12px;
    font-size: 21px;
}

.data {
    width: 100%;
    table-layout: fixed;
    border-collapse: collapse;
}

.data th {
    height: 42px;
    padding: 0 6px;
    font-size: 21px;
    line-height: 30px;
    font-weight: 400;
    text-align: left;
}

.data td {
    padding: 6px;
}

.data .col-type {
    width: 133px;
}

.data .col-remove {
    width: 48px;
}

.remove-btn {
    display: block;
    color: #52525b;
}

.watermark {
    position: fixed;
    right: 4px;
    bottom: 5px;
    font-family: "Noto Sans CJK SC", sans-serif;
    font-size: 38px;
    line-height: 54px;
    font-weight: 300;
    color: #dedede;
    text-shadow: 1px 2px 1px #808080;
}
```
